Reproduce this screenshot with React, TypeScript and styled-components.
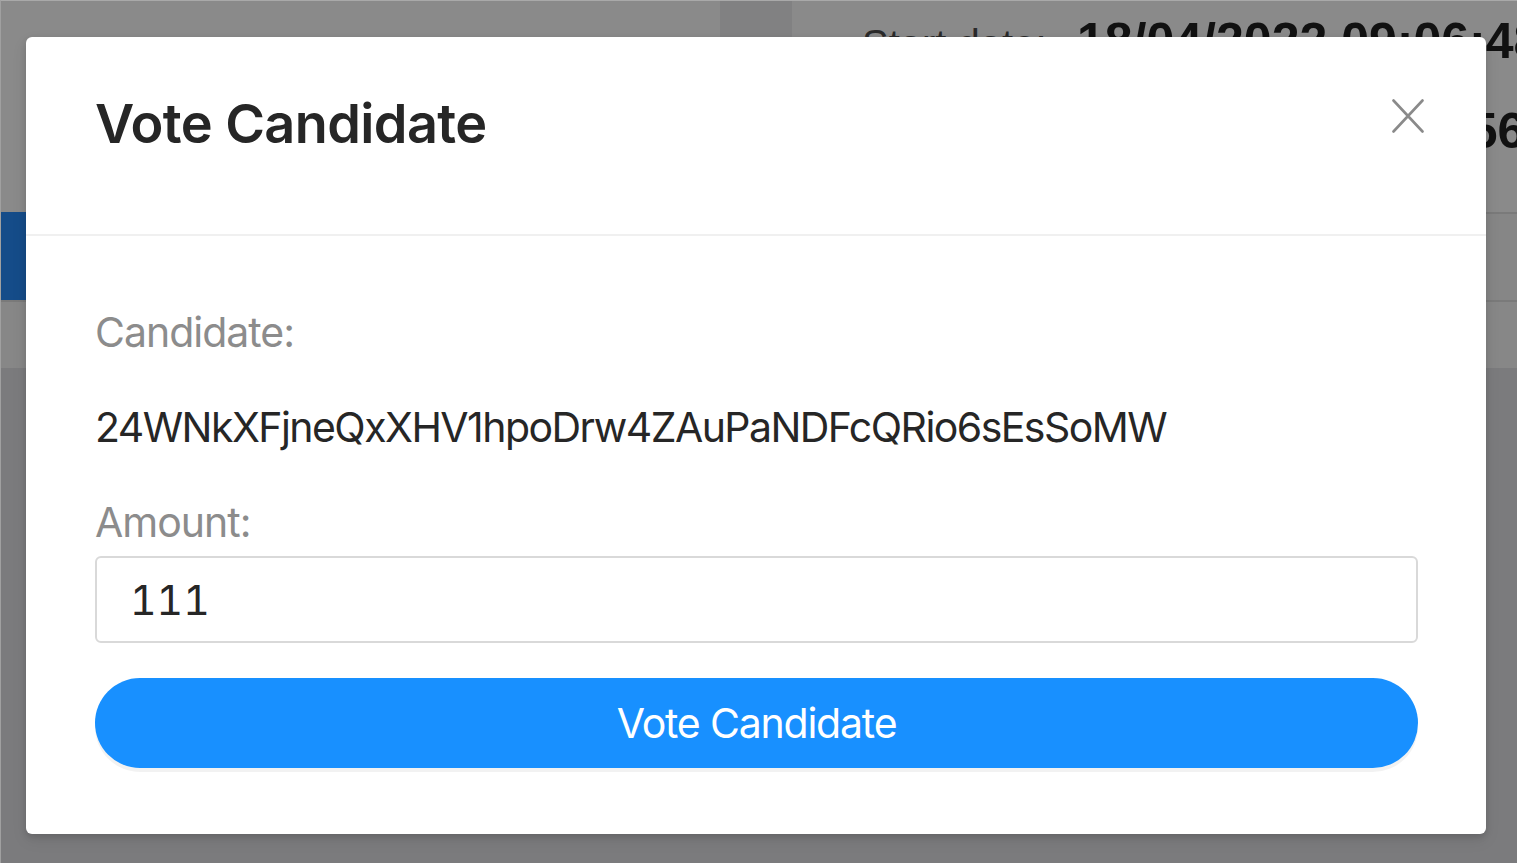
import React from "react";
import styled, { createGlobalStyle } from "styled-components";

const GlobalStyle = createGlobalStyle`
  html, body { margin: 0; padding: 0; background: #ffffff; }
  body { font-family: Inter, "Noto Sans", "Liberation Sans", sans-serif; overflow: hidden; }
  * { box-sizing: border-box; }
`;

const Page = styled.div`
  position: relative;
  width: 1517px;
  height: 863px;
  display: flex;
  flex-direction: column;
  background: #7b7b7d;
  border-top: 1px solid #a9a9a9;
  border-left: 1px solid #a0a0a0;
  overflow: hidden;
`;

const TopArea = styled.div`
  height: 211px;
  background: #8a8a8a;
  display: flex;
  align-items: flex-start;
`;

const TabBlock = styled.div`
  margin-left: 719px;
  width: 72px;
  height: 36px;
  background: #818182;
  flex: none;
`;

const DateBlock = styled.div`
  margin-left: 70px;
  margin-top: 10px;
  display: flex;
  flex-direction: column;
  gap: 27px;
  font-family: "Liberation Sans", Arial, sans-serif;
  white-space: nowrap;
`;

const DateRow = styled.div`
  display: flex;
  align-items: baseline;
  line-height: 60px;
`;

const DateLabel = styled.span<{ $w: number }>`
  width: ${(p) => p.$w}px;
  flex: none;
  font-size: 40px;
  color: #2a2a2a;
`;

const DateValue = styled.span`
  font-size: 50px;
  font-weight: 700;
  color: #111;
`;

const Band = styled.div<{ $h: number; $bg: string }>`
  height: ${(p) => p.$h}px;
  background: ${(p) => p.$bg};
  border-top: 2px solid #7a7a7a;
  display: flex;
`;

const MenuItem = styled.div`
  width: 25px;
  background: #154c89;
  margin-top: -2px;
`;

const Mask = styled.div`
  position: absolute;
  inset: 0;
`;

const Modal = styled.div`
  position: absolute;
  left: 25px;
  top: 36px;
  width: 1460px;
  height: 797px;
  background: #ffffff;
  border-radius: 6px;
  box-shadow: 0 6px 16px rgba(0, 0, 0, 0.08), 0 3px 6px rgba(0, 0, 0, 0.12);
  display: flex;
  flex-direction: column;
`;

const Header = styled.div`
  position: relative;
  height: 199px;
  padding: 54px 62px 0 69px;
  border-bottom: 2px solid #f0f0f0;
`;

const Title = styled.h2`
  margin: 0;
  font-family: Inter, "Noto Sans", sans-serif;
  font-size: 54px;
  line-height: 66px;
  font-weight: 600;
  color: #262626;
  letter-spacing: -0.6px;
`;

const CloseButton = styled.button`
  position: absolute;
  right: 62px;
  top: 62px;
  width: 32px;
  height: 34px;
  padding: 0;
  border: none;
  background: transparent;
  display: flex;
  align-items: center;
  justify-content: center;
  cursor: pointer;
`;

const Body = styled.div`
  padding: 66px 68px 66px 69px;
  display: flex;
  flex-direction: column;
`;

const Label = styled.div`
  font-size: 41px;
  line-height: 61px;
  color: #8c8c8c;
  letter-spacing: -1px;
`;

const Address = styled.div`
  margin: 34px 0 34px;
  font-size: 41px;
  line-height: 61px;
  color: #262626;
  white-space: nowrap;
  letter-spacing: -1.55px;
`;

const Input = styled.input`
  margin-top: 3px;
  width: 100%;
  height: 87px;
  padding: 0 33px;
  border: 2px solid #d9d9d9;
  border-radius: 6px;
  font-family: Inter, "Noto Sans", sans-serif;
  font-size: 41px;
  font-feature-settings: "tnum";
  color: #262626;
  outline: none;
  background: #fff;
`;

const Primary = styled.button`
  margin-top: 35px;
  width: 100%;
  height: 90px;
  border: none;
  border-radius: 45px;
  background: #1890ff;
  color: #ffffff;
  font-family: Inter, "Noto Sans", sans-serif;
  font-size: 41px;
  letter-spacing: -1.2px;
  box-shadow: 0 4px 0 rgba(0, 0, 0, 0.05);
  cursor: pointer;
`;

export default function App() {
  return (
    <>
      <GlobalStyle />
      <Page>
        <TopArea>
          <TabBlock />
          <DateBlock>
            <DateRow>
              <DateLabel $w={215}>Start date:</DateLabel>
              <DateValue>18/04/2022 09:06:48</DateValue>
            </DateRow>
            <DateRow>
              <DateLabel $w={199}>End date:</DateLabel>
              <DateValue>25/04/2022 09:06:56</DateValue>
            </DateRow>
          </DateBlock>
        </TopArea>
        <Band $h={88} $bg="#868686">
          <MenuItem />
        </Band>
        <Band $h={68} $bg="#878787" />
        <Mask>
          <Modal>
            <Header>
              <Title>Vote Candidate</Title>
              <CloseButton aria-label="Close">
                <svg width="32" height="34" viewBox="0 0 32 34" fill="none">
                  <path d="M1.5 1.5 L30.5 32.5 M30.5 1.5 L1.5 32.5" stroke="#8a8a8a" strokeWidth="2.6" strokeLinecap="round" />
                </svg>
              </CloseButton>
            </Header>
            <Body>
              <Label>Candidate:</Label>
              <Address>24WNkXFjneQxXHV1hpoDrw4ZAuPaNDFcQRio6sEsSoMW</Address>
              <Label>Amount:</Label>
              <Input defaultValue="111" />
              <Primary>Vote Candidate</Primary>
            </Body>
          </Modal>
        </Mask>
      </Page>
    </>
  );
}
